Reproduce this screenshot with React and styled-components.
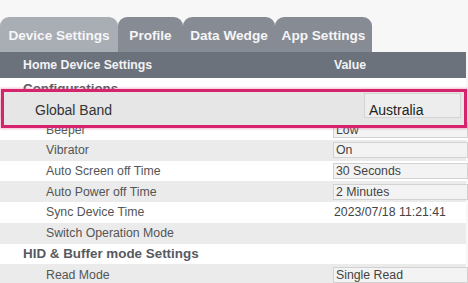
import React from "react";
import styled, { createGlobalStyle } from "styled-components";

const Global = createGlobalStyle`
  html, body { margin: 0; padding: 0; background: #f7f7f8; }
  body { font-family: "Liberation Sans", Arial, sans-serif; }
`;

const Page = styled.div`
  position: relative;
  width: 468px;
  height: 283px;
  overflow: hidden;
  background: #f7f7f8;
`;

const TabBar = styled.div`
  display: flex;
  align-items: flex-end;
  height: 52px;
  padding-top: 17px;
  box-sizing: border-box;
`;

const Tab = styled.div`
  width: ${(p) => p.$w}px;
  height: 35px;
  display: flex;
  align-items: center;
  justify-content: center;
  border-radius: 9px 9px 0 0;
  background: ${(p) => (p.$active ? "#a9adb4" : "#878c94")};
  color: #f6f6f8;
  font-weight: bold;
  font-size: 13.6px;
  box-sizing: border-box;
  padding-top: 1px;
`;

const Table = styled.div`
  width: 466px;
`;

const Header = styled.div`
  display: grid;
  grid-template-columns: 333px 1fr;
  align-items: center;
  height: 26px;
  background: #6c727b;
  color: #f2f3f6;
  font-weight: bold;
  font-size: 12.3px;
`;

const HeadCell = styled.div`
  padding-left: ${(p) => p.$pad || 0}px;
`;

const Row = styled.div`
  display: grid;
  grid-template-columns: 333px 1fr;
  align-items: center;
  height: 20.7px;
  background: ${(p) => (p.$alt ? "#ebebeb" : "#ffffff")};
`;

const Label = styled.div`
  padding-left: ${(p) => (p.$section ? 23 : 46)}px;
  font-size: ${(p) => (p.$section ? 13.4 : 12.3)}px;
  font-weight: ${(p) => (p.$section ? "bold" : "normal")};
  color: ${(p) => (p.$section ? "#585a62" : "#555555")};
  white-space: nowrap;
`;

const ValueBox = styled.div`
  height: 16px;
  border: 1px solid #d2d2d2;
  background: #f3f3f3;
  box-sizing: border-box;
  padding-left: 2px;
  font-size: 12.3px;
  line-height: 14px;
  color: #444;
  margin-right: -2px;
`;

const ValueText = styled.div`
  padding-left: 1px;
  font-size: 12.3px;
  color: #444;
`;

const Highlight = styled.div`
  position: absolute;
  left: 1px;
  top: 89px;
  width: 466px;
  height: 39px;
  box-sizing: border-box;
  border: 3px solid #d6246c;
  box-shadow: 0 0 2px 1px rgba(230, 110, 160, 0.45);
  background: #e6e6e6;
  display: grid;
  grid-template-columns: 360px 1fr;
  align-items: start;
`;

const BigLabel = styled.div`
  padding-left: 31px;
  padding-top: 10px;
  font-size: 14px;
  line-height: 16px;
  color: #333;
`;

const BigValue = styled.div`
  margin-top: 1px;
  height: 25px;
  margin-right: 3px;
  border: 1px solid #d3d3d3;
  background: #ededed;
  box-sizing: border-box;
  padding: 8px 0 0 4px;
  font-size: 14px;
  line-height: 16px;
  color: #222;
`;

const tabs = [
  { t: "Device Settings", w: 118, active: true },
  { t: "Profile", w: 65 },
  { t: "Data Wedge", w: 92 },
  { t: "App Settings", w: 97 },
];

const rows = [
  { label: "Configurations", section: true },
  { label: "", magnified: true },
  { label: "Beeper", value: "Low", box: true },
  { label: "Vibrator", value: "On", box: true },
  { label: "Auto Screen off Time", value: "30 Seconds", box: true },
  { label: "Auto Power off Time", value: "2 Minutes", box: true },
  { label: "Sync Device Time", value: "2023/07/18 11:21:41" },
  { label: "Switch Operation Mode" },
  { label: "HID & Buffer mode Settings", section: true },
  { label: "Read Mode", value: "Single Read", box: true },
];

export default function App() {
  return (
    <Page>
      <Global />
      <TabBar>
        {tabs.map((t) => (
          <Tab key={t.t} $w={t.w} $active={t.active}>
            {t.t}
          </Tab>
        ))}
      </TabBar>
      <Table>
        <Header>
          <HeadCell $pad={23}>Home Device Settings</HeadCell>
          <HeadCell $pad={1}>Value</HeadCell>
        </Header>
        {rows.map((r, i) => (
          <Row key={i} $alt={i % 2 === 1}>
            <Label $section={r.section}>{r.label}</Label>
            {r.value ? (
              r.box ? (
                <ValueBox>{r.value}</ValueBox>
              ) : (
                <ValueText>{r.value}</ValueText>
              )
            ) : (
              <div />
            )}
          </Row>
        ))}
      </Table>
      <Highlight>
        <BigLabel>Global Band</BigLabel>
        <BigValue>Australia</BigValue>
      </Highlight>
    </Page>
  );
}
